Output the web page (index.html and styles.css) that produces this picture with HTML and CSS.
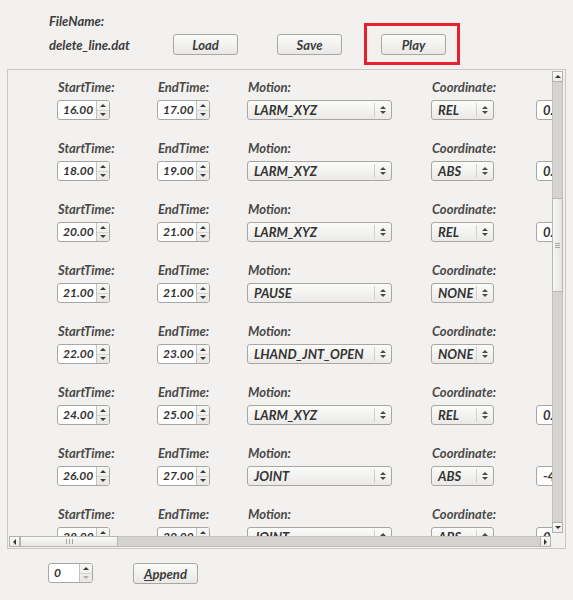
FILE: index.html
```html
<!DOCTYPE html>
<html>
<head>
<meta charset="utf-8">
<link rel="stylesheet" href="styles.css">
</head>
<body>
<div class="top">
  <div class="fname-label">FileName:</div>
  <div class="file-row">
    <span class="fname">delete_line.dat</span>
    <button class="btn">Load</button>
    <button class="btn gap">Save</button>
    <div class="play-wrap gap"><button class="btn">Play</button><div class="highlight"></div></div>
  </div>
</div>

<div class="scroll-frame">
  <div class="viewport">
    <div class="rows">

      <div class="row">
        <div class="lbl">StartTime:</div><div class="lbl">EndTime:</div><div class="lbl">Motion:</div><div class="lbl">Coordinate:</div><div class="lbl"></div>
        <div class="spin"><span class="val">16.00</span><span class="sb"><i class="up"></i><i class="dn"></i></span></div>
        <div class="spin"><span class="val">17.00</span><span class="sb"><i class="up"></i><i class="dn"></i></span></div>
        <div class="combo wide"><span class="val">LARM_XYZ</span><span class="arr"></span></div>
        <div class="combo narrow"><span class="val">REL</span><span class="arr"></span></div>
        <div class="field"><span class="val">0.</span></div>
      </div>

      <div class="row">
        <div class="lbl">StartTime:</div><div class="lbl">EndTime:</div><div class="lbl">Motion:</div><div class="lbl">Coordinate:</div><div class="lbl"></div>
        <div class="spin"><span class="val">18.00</span><span class="sb"><i class="up"></i><i class="dn"></i></span></div>
        <div class="spin"><span class="val">19.00</span><span class="sb"><i class="up"></i><i class="dn"></i></span></div>
        <div class="combo wide"><span class="val">LARM_XYZ</span><span class="arr"></span></div>
        <div class="combo narrow"><span class="val">ABS</span><span class="arr"></span></div>
        <div class="field"><span class="val">0.</span></div>
      </div>

      <div class="row">
        <div class="lbl">StartTime:</div><div class="lbl">EndTime:</div><div class="lbl">Motion:</div><div class="lbl">Coordinate:</div><div class="lbl"></div>
        <div class="spin"><span class="val">20.00</span><span class="sb"><i class="up"></i><i class="dn"></i></span></div>
        <div class="spin"><span class="val">21.00</span><span class="sb"><i class="up"></i><i class="dn"></i></span></div>
        <div class="combo wide"><span class="val">LARM_XYZ</span><span class="arr"></span></div>
        <div class="combo narrow"><span class="val">REL</span><span class="arr"></span></div>
        <div class="field"><span class="val">0.</span></div>
      </div>

      <div class="row">
        <div class="lbl">StartTime:</div><div class="lbl">EndTime:</div><div class="lbl">Motion:</div><div class="lbl">Coordinate:</div><div class="lbl"></div>
        <div class="spin"><span class="val">21.00</span><span class="sb"><i class="up"></i><i class="dn"></i></span></div>
        <div class="spin"><span class="val">21.00</span><span class="sb"><i class="up"></i><i class="dn"></i></span></div>
        <div class="combo wide"><span class="val">PAUSE</span><span class="arr"></span></div>
        <div class="combo narrow"><span class="val">NONE</span><span class="arr"></span></div>
        <div class="empty"></div>
      </div>

      <div class="row">
        <div class="lbl">StartTime:</div><div class="lbl">EndTime:</div><div class="lbl">Motion:</div><div class="lbl">Coordinate:</div><div class="lbl"></div>
        <div class="spin"><span class="val">22.00</span><span class="sb"><i class="up"></i><i class="dn"></i></span></div>
        <div class="spin"><span class="val">23.00</span><span class="sb"><i class="up"></i><i class="dn"></i></span></div>
        <div class="combo wide"><span class="val">LHAND_JNT_OPEN</span><span class="arr"></span></div>
        <div class="combo narrow"><span class="val">NONE</span><span class="arr"></span></div>
        <div class="empty"></div>
      </div>

      <div class="row">
        <div class="lbl">StartTime:</div><div class="lbl">EndTime:</div><div class="lbl">Motion:</div><div class="lbl">Coordinate:</div><div class="lbl"></div>
        <div class="spin"><span class="val">24.00</span><span class="sb"><i class="up"></i><i class="dn"></i></span></div>
        <div class="spin"><span class="val">25.00</span><span class="sb"><i class="up"></i><i class="dn"></i></span></div>
        <div class="combo wide"><span class="val">LARM_XYZ</span><span class="arr"></span></div>
        <div class="combo narrow"><span class="val">REL</span><span class="arr"></span></div>
        <div class="field"><span class="val">0.</span></div>
      </div>

      <div class="row">
        <div class="lbl">StartTime:</div><div class="lbl">EndTime:</div><div class="lbl">Motion:</div><div class="lbl">Coordinate:</div><div class="lbl"></div>
        <div class="spin"><span class="val">26.00</span><span class="sb"><i class="up"></i><i class="dn"></i></span></div>
        <div class="spin"><span class="val">27.00</span><span class="sb"><i class="up"></i><i class="dn"></i></span></div>
        <div class="combo wide"><span class="val">JOINT</span><span class="arr"></span></div>
        <div class="combo narrow"><span class="val">ABS</span><span class="arr"></span></div>
        <div class="field"><span class="val">-4</span></div>
      </div>

      <div class="row">
        <div class="lbl">StartTime:</div><div class="lbl">EndTime:</div><div class="lbl">Motion:</div><div class="lbl">Coordinate:</div><div class="lbl"></div>
        <div class="spin"><span class="val">28.00</span><span class="sb"><i class="up"></i><i class="dn"></i></span></div>
        <div class="spin"><span class="val">29.00</span><span class="sb"><i class="up"></i><i class="dn"></i></span></div>
        <div class="combo wide"><span class="val">JOINT</span><span class="arr"></span></div>
        <div class="combo narrow"><span class="val">ABS</span><span class="arr"></span></div>
        <div class="field"><span class="val">0.</span></div>
      </div>

    </div>
  </div>

  <div class="vscroll">
    <div class="sbtn"><i class="tri-up"></i></div>
    <div class="vtrack">
      <div class="vspace"></div>
      <div class="vthumb"><span class="grip-h"></span></div>
    </div>
    <div class="sbtn"><i class="tri-dn"></i></div>
  </div>

  <div class="hscroll">
    <div class="sbtn"><i class="tri-lt"></i></div>
    <div class="htrack">
      <div class="hthumb"><span class="grip-v"></span></div>
    </div>
    <div class="sbtn"><i class="tri-rt"></i></div>
  </div>
  <div class="corner"></div>
</div>

<div class="bottom">
  <div class="spin small"><span class="val">0</span><span class="sb"><i class="up"></i><i class="dn dis"></i></span></div>
  <button class="btn append"><u>A</u>ppend</button>
</div>
</body>
</html>
```

FILE: styles.css
```css
* { box-sizing: border-box; }
html, body { margin: 0; padding: 0; }
body {
  width: 573px;
  height: 600px;
  background: #f2f1f0;
  font-family: Lato, "Open Sans", "DejaVu Sans", sans-serif;
  font-weight: bold;
  font-style: italic;
  font-size: 13px;
  color: #3c3c3c;
  overflow: hidden;
}

.top {
  height: 69px;
  padding: 14px 0 0 49px;
}
.fname-label { line-height: 14px; height: 14px; }
.file-row {
  margin-top: 6px;
  display: flex;
  align-items: center;
  height: 21px;
}
.fname { width: 124px; line-height: 14px; }

.btn {
  width: 65px;
  height: 21px;
  padding: 0;
  border: 1px solid #a9a7a4;
  border-radius: 3px;
  background: linear-gradient(#fbfbfa, #e9e8e6);
  font: inherit;
  color: #3c3c3c;
  line-height: 18px;
  text-align: center;
}
.gap { margin-left: 39px; }
.play-wrap { position: relative; height: 21px; }
.highlight {
  position: absolute;
  left: -17px;
  top: -11px;
  width: 96px;
  height: 42px;
  border: 3px solid #e8202c;
}

.scroll-frame {
  margin-left: 7px;
  width: 559px;
  height: 480px;
  border: 1px solid #cac8c5;
  display: grid;
  grid-template-columns: 544px 13px;
  grid-template-rows: 466px 12px;
}
.viewport { overflow: hidden; }
.rows { padding-top: 10px; padding-left: 49px; }
.row {
  display: grid;
  grid-template-columns: 100px 90px 184px 105px 80px;
  grid-template-rows: 14px 20px;
  row-gap: 6px;
  margin-bottom: 21px;
  width: 560px;
}
.lbl { line-height: 14px; padding-left: 1px; white-space: nowrap; color: #4a4947; }

.spin {
  width: 53px;
  height: 20px;
  border: 1px solid #a9a7a4;
  border-radius: 3px;
  background: #fff;
  display: flex;
  overflow: hidden;
}
.spin .val { flex: 1; padding-left: 5px; line-height: 18px; color: #333; font-size: 12px; }
.sb {
  width: 13px;
  border-left: 1px solid #c4c2bf;
  background: linear-gradient(#f7f7f6, #e8e7e5);
  display: flex;
  flex-direction: column;
}
.sb i { flex: 1; display: flex; align-items: center; justify-content: center; }
.sb i.up { border-bottom: 1px solid #d6d4d1; }
.sb i.up::before {
  content: "";
  border-left: 3px solid transparent;
  border-right: 3px solid transparent;
  border-bottom: 3px solid #3c3c3c;
}
.sb i.dn::before {
  content: "";
  border-left: 3px solid transparent;
  border-right: 3px solid transparent;
  border-top: 3px solid #3c3c3c;
}
.sb i.dn.dis::before { border-top-color: #b0aeab; }

.combo {
  height: 20px;
  border: 1px solid #a9a7a4;
  border-radius: 3px;
  background: linear-gradient(#fbfbfa, #ebeae8);
  display: flex;
  align-items: center;
}
.combo.wide { width: 145px; }
.combo.narrow { width: 63px; }
.combo .val { flex: 1; padding-left: 6px; line-height: 18px; color: #333; white-space: nowrap; }
.combo .arr {
  width: 17px;
  height: 14px;
  border-left: 1px solid #d3d1ce;
  display: flex;
  flex-direction: column;
  align-items: center;
  justify-content: center;
  gap: 2px;
}
.combo .arr::before {
  content: "";
  border-left: 3px solid transparent;
  border-right: 3px solid transparent;
  border-bottom: 3px solid #4a4a4a;
}
.combo .arr::after {
  content: "";
  border-left: 3px solid transparent;
  border-right: 3px solid transparent;
  border-top: 3px solid #4a4a4a;
}

.field {
  width: 60px;
  height: 20px;
  border: 1px solid #a9a7a4;
  border-radius: 3px;
  background: #fff;
}
.field .val { display: block; padding-left: 6px; line-height: 18px; color: #333; }

.vscroll {
  padding-top: 1px;
  padding-bottom: 3px;
  display: flex;
  flex-direction: column;
  width: 11px;
}
.hscroll {
  padding-left: 1px;
  display: flex;
  height: 11px;
  width: 543px;
}
.sbtn {
  width: 11px;
  height: 11px;
  flex: none;
  border: 1px solid #b3b1ae;
  background: linear-gradient(#fbfbfa, #ecebe9);
  display: flex;
  align-items: center;
  justify-content: center;
}
.tri-up { border-left: 3px solid transparent; border-right: 3px solid transparent; border-bottom: 3px solid #333; }
.tri-dn { border-left: 3px solid transparent; border-right: 3px solid transparent; border-top: 3px solid #333; }
.tri-lt { border-top: 3px solid transparent; border-bottom: 3px solid transparent; border-right: 3px solid #333; }
.tri-rt { border-top: 3px solid transparent; border-bottom: 3px solid transparent; border-left: 3px solid #333; }

.vtrack {
  flex: 1;
  background: #d4d3d1;
  border-left: 1px solid #c2c0bd;
  border-right: 1px solid #c2c0bd;
  display: flex;
  flex-direction: column;
}
.vspace { height: 116px; }
.vthumb {
  height: 94px;
  margin: 0 -1px;
  border: 1px solid #b9b7b4;
  background: linear-gradient(90deg, #f6f6f5, #e6e5e3);
  display: flex;
  align-items: center;
  justify-content: center;
}
.grip-h {
  width: 5px;
  height: 5px;
  background: repeating-linear-gradient(#a8a6a3 0 1px, transparent 1px 2px);
}
.htrack {
  flex: 1;
  background: #d4d3d1;
  border-top: 1px solid #c2c0bd;
  border-bottom: 1px solid #c2c0bd;
  display: flex;
}
.hthumb {
  width: 98px;
  margin: -1px 0;
  border: 1px solid #b9b7b4;
  background: linear-gradient(#f8f8f7, #e8e7e5);
  display: flex;
  align-items: center;
  justify-content: center;
}
.grip-v {
  width: 7px;
  height: 5px;
  background: repeating-linear-gradient(90deg, #a8a6a3 0 1px, transparent 1px 3px);
}

.bottom {
  padding: 14px 0 0 48px;
  display: flex;
  align-items: flex-start;
}
.spin.small { width: 45px; height: 20px; margin-right: 40px; }
.btn.append { width: 65px; height: 21px; }
```
